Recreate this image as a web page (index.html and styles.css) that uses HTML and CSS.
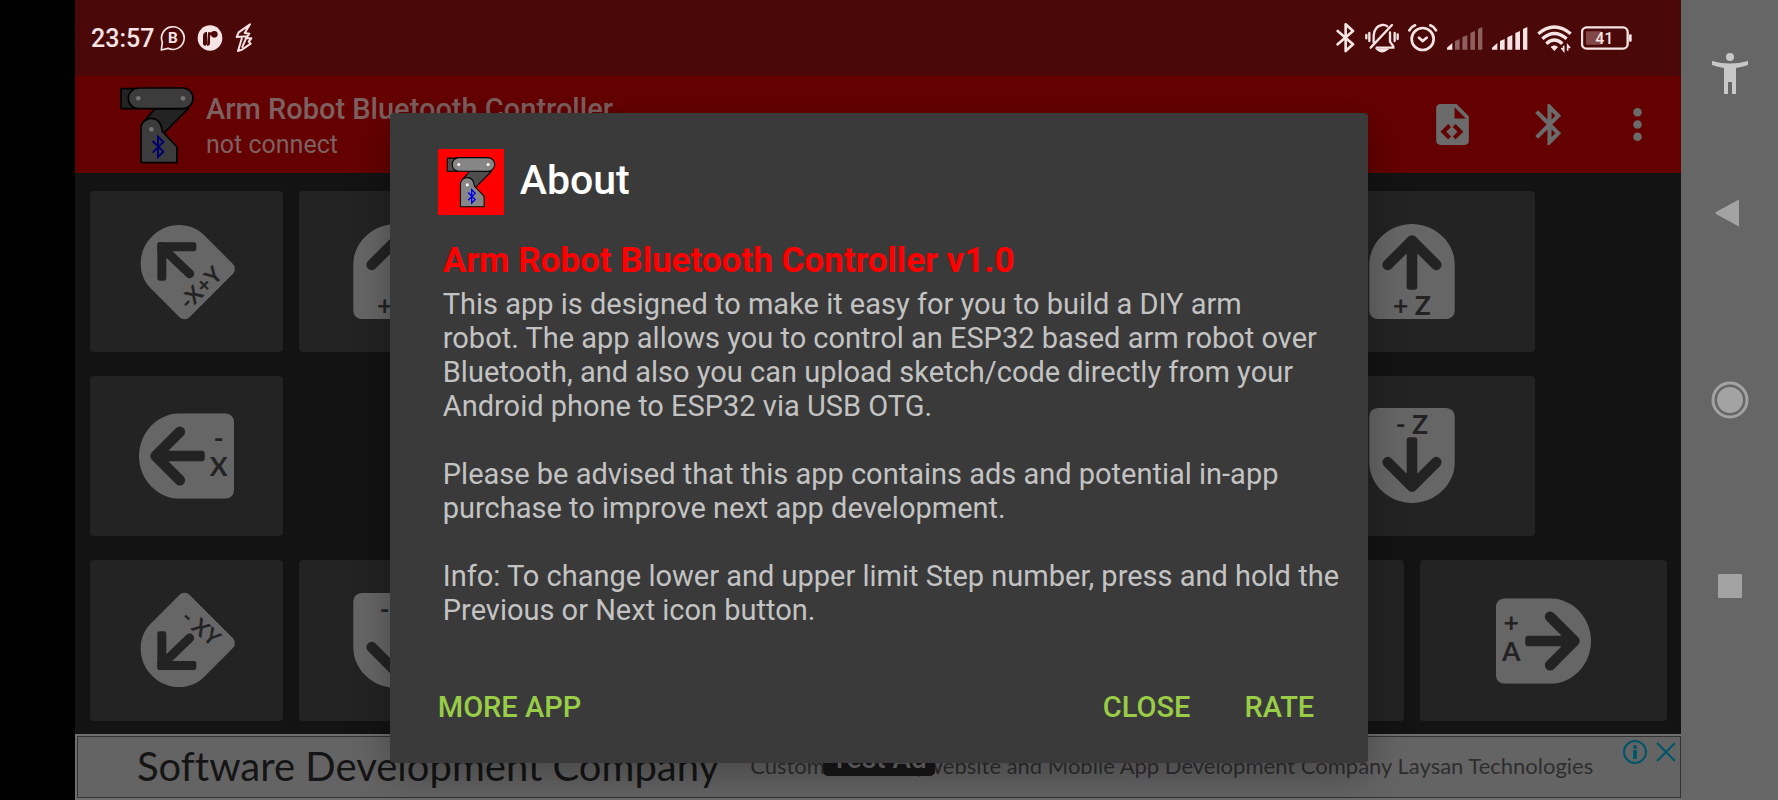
FILE: index.html
```html
<!DOCTYPE html>
<html lang="en">
<head>
<meta charset="UTF-8">
<meta name="viewport" content="width=device-width, initial-scale=1.0">
<title>Arm Robot Bluetooth Controller</title>
<link rel="stylesheet" href="styles.css">
</head>
<body>

<!-- shared shapes -->
<svg class="defs" width="0" height="0" aria-hidden="true">
  <symbol id="robot" viewBox="28 30 228 234">
    <g stroke="#000" stroke-width="5" stroke-linejoin="round">
      <path class="robot-dark" d="M34 38H80V98H34Z"/>
      <path class="robot-dark" d="M136 98H236L158 176L100 140Z"/>
      <rect class="robot-light" x="56" y="36" width="194" height="62" rx="31"/>
      <path class="robot-light" d="M94 260V163A31 31 0 0 1 155 152L158 166L202 213V260Z"/>
    </g>
    <circle class="robot-dot" cx="86" cy="67" r="7"/>
    <circle class="robot-dot" cx="220" cy="67" r="7"/>
    <circle class="robot-dot" cx="125" cy="160" r="7"/>
    <path class="robot-bt" d="M129 195L161 227L145 243V182L161 198L129 230" fill="none" stroke-width="6"/>
  </symbol>
  <symbol id="plate" viewBox="0 0 258 286">
    <path d="M129 0C200 0 258 56 258 124V260A26 26 0 0 1 232 286H26A26 26 0 0 1 0 260V124C0 56 58 0 129 0Z"/>
  </symbol>
  <symbol id="arrow" viewBox="0 0 258 286">
    <path d="M56 123L129 50L202 123" fill="none" stroke="#232323" stroke-width="32" stroke-linecap="round" stroke-linejoin="round"/>
    <path d="M129 40L150 62L146 90H112L108 62Z" fill="#232323"/>
    <rect x="113" y="50" width="32" height="148" rx="9" fill="#232323"/>
  </symbol>
</svg>

<div class="cutout"></div>

<div class="app">
  <div class="status-bar">
    <span class="clock">23:57</span>
    <svg width="26" height="30" viewBox="0 0 78 90" fill="none" stroke="#f6e4e4" stroke-width="5">
      <path d="M4 81L7 58A34 34 0 1 1 24 76Z" stroke-linejoin="round"/>
      <text x="39" y="60" text-anchor="middle" class="icon-text">B</text>
    </svg>
    <svg class="gap-left" width="26" height="30" viewBox="0 0 78 90">
      <ellipse cx="39" cy="45" rx="37" ry="38" fill="#f6e4e4"/>
      <path d="M30 24V62A6 6 0 0 1 18 62V40Q18 27 30 26M33 28H44V32Q40 34 39 42V62Q38 70 30 68" fill="#4a0908"/>
      <circle cx="52" cy="34" r="10" fill="#4a0908"/>
    </svg>
    <svg class="gap-left" width="20" height="30" viewBox="0 0 60 90" fill="none" stroke="#f6e4e4" stroke-width="6" stroke-linejoin="round">
      <path d="M48 4L14 28L8 42L40 40L46 32L32 30L48 4ZM24 44L12 84L24 80L50 62L44 56L52 46L36 46L24 74"/>
    </svg>

    <div class="status-right">
      <svg width="20" height="30" viewBox="27 24 60 90" fill="none" stroke="#f6e4e4" stroke-width="8" stroke-linejoin="round" stroke-linecap="round">
        <path d="M32 48L78 88L56 108V28L78 48L32 88"/>
      </svg>
      <svg width="34" height="30" viewBox="117 24 102 90" fill="none" stroke="#f6e4e4" stroke-width="7" stroke-linecap="round">
        <path d="M121 60V70M130 54V78M215 58V72M206 54V78M134 98L198 30"/>
        <path d="M143 82V62Q145 34 168 30Q178 29 184 34M192 52V80L202 94V98H152"/>
        <path d="M156 104Q168 114 181 104Z" fill="#f6e4e4"/>
      </svg>
      <svg width="30" height="30" viewBox="249 24 90 90" fill="none" stroke="#f6e4e4" stroke-width="8" stroke-linecap="round">
        <circle cx="293" cy="72" r="33"/>
        <path d="M282 68L293 78L305 68M253 46Q258 36 270 31M333 46Q328 36 316 31"/>
      </svg>
      <svg width="36" height="30" viewBox="366 24 108 90" fill="#8d5f5f">
        <path d="M366 104V98L382 84V104Z" fill="#f6e4e4"/>
        <path d="M390 78L404 72V104H390ZM412 67L427 60V104H412ZM436 54L450 48V104H436ZM459 42L472 36V104H459Z"/>
      </svg>
      <svg width="36" height="30" viewBox="498 24 108 90" fill="#f6e4e4">
        <path d="M498 104V98L514 84V104ZM522 78L536 72V104H522ZM544 67L559 60V104H544ZM568 54L582 48V104H568ZM591 42L604 36V104H591Z"/>
      </svg>
      <svg width="35" height="30" viewBox="633 24 105 90" fill="none" stroke="#f6e4e4" stroke-width="10">
        <path d="M637 56Q685 16 734 56M649 71Q685 40 722 71M661 86Q685 64 709 86"/>
        <path d="M675 96Q685 88 695 96L685 107Z" fill="#f6e4e4" stroke-width="2"/>
        <path d="M713 92V107L706 99M725 107V91L732 99" stroke-width="5"/>
      </svg>
      <svg width="51" height="30" viewBox="768 24 153 90">
        <rect x="771" y="37" width="137" height="64" rx="14" fill="none" stroke="#f6e4e4" stroke-width="7"/>
        <rect x="783" y="49" width="46" height="40" rx="3" fill="#824848"/>
        <rect x="912" y="58" width="8" height="22" rx="3" fill="#f6e4e4"/>
        <text x="838" y="87" text-anchor="middle" class="battery-text">41</text>
      </svg>
    </div>
  </div>

  <div class="screen">
    <header class="action-bar">
      <svg class="logo robot-dim" width="76" height="78"><use href="#robot"/></svg>
      <div class="titles">
        <h1>Arm Robot Bluetooth Controller</h1>
        <p>not connect</p>
      </div>
      <div class="actions">
        <button type="button" class="action" aria-label="Upload code">
          <svg width="49" height="49" viewBox="0 0 24 24"><path d="M13,9H18.5L13,3.5V9M6,2H14L20,8V20A2,2 0 0,1 18,22H6C4.89,22 4,21.1 4,20V4C4,2.89 4.89,2 6,2M6.12,15.5L9.86,19.24L11.28,17.83L8.95,15.5L11.28,13.17L9.86,11.76L6.12,15.5M17.28,15.5L13.54,11.76L12.12,13.17L14.45,15.5L12.12,17.83L13.54,19.24L17.28,15.5Z"/></svg>
        </button>
        <button type="button" class="action" aria-label="Bluetooth">
          <svg width="49" height="49" viewBox="0 0 24 24"><path d="M17.71 7.71L12 2h-1v7.59L6.41 5 5 6.41 10.59 12 5 17.59 6.41 19 11 14.41V22h1l5.71-5.71-4.3-4.29 4.3-4.29zM13 5.83l1.88 1.88L13 9.59V5.83zm1.88 10.46L13 18.17v-3.76l1.88 1.88z"/></svg>
        </button>
        <button type="button" class="action more" aria-label="More options">
          <svg width="49" height="49" viewBox="0 0 24 24"><circle cx="12" cy="6" r="2.1"/><circle cx="12" cy="12" r="2.1"/><circle cx="12" cy="18" r="2.1"/></svg>
        </button>
      </div>
    </header>

    <main class="pad">
      <div class="pad-left">
        <button type="button" class="key">
          <svg width="94" height="95" viewBox="0 0 282 285">
            <use href="#plate" width="258" height="286" transform="translate(115 116) rotate(-45) scale(.88) translate(-129 -127)"/>
            <path d="M74 78L149 149" stroke="#232323" stroke-width="27" stroke-linecap="round"/>
            <rect x="52" y="55" width="117" height="27" rx="7" fill="#232323"/>
            <rect x="52" y="55" width="27" height="115" rx="7" fill="#232323"/>
            <text transform="translate(199 208) rotate(-45)" text-anchor="middle" class="key-small">-X+Y</text>
          </svg>
        </button>
        <button type="button" class="key">
          <svg width="86" height="95" viewBox="0 0 258 286">
            <use href="#plate"/><use href="#arrow"/>
            <text x="129" y="273" text-anchor="middle" class="key-text">+ Y</text>
          </svg>
        </button>
        <button type="button" class="key">
          <svg width="95" height="86" viewBox="0 0 286 258">
            <g transform="translate(286 0) rotate(90)"><use href="#plate" width="258" height="286"/></g>
          </svg>
        </button>
        <button type="button" class="key">
          <svg width="95" height="86" viewBox="0 0 286 258">
            <g transform="translate(0 258) rotate(-90)"><use href="#plate" width="258" height="286"/><use href="#arrow" width="258" height="286"/></g>
            <text x="240" y="106" text-anchor="middle" class="key-text">-</text>
            <text x="240" y="188" text-anchor="middle" class="key-text">X</text>
          </svg>
        </button>
        <button type="button" class="key key-third">
          <svg width="95" height="86" viewBox="0 0 286 258">
            <g transform="translate(286 0) rotate(90)"><use href="#plate" width="258" height="286"/><use href="#arrow" width="258" height="286"/></g>
          </svg>
        </button>
        <button type="button" class="key">
          <svg width="94" height="95" viewBox="0 0 282 285">
            <use href="#plate" width="258" height="286" transform="translate(115 169) rotate(-135) scale(.88) translate(-129 -127)"/>
            <path d="M74 207L149 135" stroke="#232323" stroke-width="27" stroke-linecap="round"/>
            <rect x="52" y="204" width="117" height="27" rx="7" fill="#232323"/>
            <rect x="52" y="115" width="27" height="116" rx="7" fill="#232323"/>
            <text transform="translate(168 122) rotate(40)" text-anchor="middle" class="key-small">- XY</text>
          </svg>
        </button>
        <button type="button" class="key">
          <svg width="86" height="95" viewBox="0 0 258 286">
            <g transform="translate(258 286) rotate(180)"><use href="#plate" width="258" height="286"/><use href="#arrow" width="258" height="286"/></g>
            <text x="129" y="78" text-anchor="middle" class="key-text">- Y</text>
          </svg>
        </button>
        <button type="button" class="key">
          <svg width="95" height="86" viewBox="0 0 286 258">
            <g transform="translate(286 0) rotate(90)"><use href="#plate" width="258" height="286"/></g>
          </svg>
        </button>
      </div>

      <div class="pad-right">
        <button type="button" class="key key-mid">
          <svg width="86" height="95" viewBox="0 0 258 286">
            <use href="#plate"/><use href="#arrow"/>
            <text x="129" y="273" text-anchor="middle" class="key-text">+ Z</text>
          </svg>
        </button>
        <button type="button" class="key key-mid">
          <svg width="86" height="95" viewBox="0 0 258 286">
            <g transform="translate(258 286) rotate(180)"><use href="#plate" width="258" height="286"/><use href="#arrow" width="258" height="286"/></g>
            <text x="129" y="78" text-anchor="middle" class="key-text">- Z</text>
          </svg>
        </button>
        <button type="button" class="key">
          <svg width="95" height="86" viewBox="0 0 286 258">
            <g transform="translate(0 258) rotate(-90)"><use href="#plate" width="258" height="286"/><use href="#arrow" width="258" height="286"/></g>
          </svg>
        </button>
        <button type="button" class="key">
          <svg width="95" height="86" viewBox="0 0 286 258">
            <g transform="translate(286 0) rotate(90)"><use href="#plate" width="258" height="286"/><use href="#arrow" width="258" height="286"/></g>
            <text x="46" y="101" text-anchor="middle" class="key-text">+</text>
            <text x="46" y="188" text-anchor="middle" class="key-text">A</text>
          </svg>
        </button>
      </div>
    </main>

    <aside class="ad">
      <a href="#" class="ad-link">
        <span class="ad-title">Software Development Company</span>
        <span class="ad-text">Custom Software,Website and Mobile App Development Company Laysan Technologies</span>
      </a>
      <span class="ad-badge">Test Ad</span>
      <div class="ad-choices">
        <svg width="26" height="26" viewBox="0 0 26 26" fill="none" stroke="#00566a" stroke-width="2">
          <circle cx="13" cy="13" r="11"/>
          <circle cx="13" cy="8" r="2" fill="#00566a" stroke="none"/>
          <path d="M13 11V20" stroke-width="4"/>
        </svg>
        <svg width="20" height="26" viewBox="0 0 20 26" fill="none" stroke="#00566a" stroke-width="2"><path d="M1 4L19 22M19 4L1 22"/></svg>
      </div>
    </aside>

    <div class="overlay">
      <div class="dialog" role="dialog" aria-labelledby="about-title">
        <div class="dialog-head">
          <div class="app-icon"><svg width="50" height="52"><use href="#robot"/></svg></div>
          <h2 id="about-title">About</h2>
        </div>
        <div class="dialog-body">
          <h3>Arm Robot Bluetooth Controller v1.0</h3>
          <p>This app is designed to make it easy for you to build a DIY arm<br>
            robot. The app allows you to control an ESP32 based arm robot over<br>
            Bluetooth, and also you can upload sketch/code directly from your<br>
            Android phone to ESP32 via USB OTG.</p>
          <p>Please be advised that this app contains ads and potential in-app<br>
            purchase to improve next app development.</p>
          <p>Info: To change lower and upper limit Step number, press and hold the<br>
            Previous or Next icon button.</p>
        </div>
        <div class="dialog-buttons">
          <button type="button" class="more-app">MORE APP</button>
          <button type="button">CLOSE</button>
          <button type="button">RATE</button>
        </div>
      </div>
    </div>
  </div>
</div>

<nav class="nav-bar">
  <button type="button" class="nav-access" aria-label="Accessibility">
    <svg width="38" height="42" viewBox="0 0 38 42" fill="#c8c8c8">
      <circle cx="19" cy="4" r="4"/>
      <path d="M1 8Q19 13 37 8V12Q31 14 25 15V41H21V29H17V41H13V15Q7 14 1 12Z"/>
    </svg>
  </button>
  <button type="button" aria-label="Back">
    <svg width="32" height="28" viewBox="0 0 32 28" fill="#a3a3a3"><path d="M25 1V27Q25 28 24 27L2 15Q1 14 2 13L24 1Q25 0 25 1Z"/></svg>
  </button>
  <button type="button" aria-label="Home">
    <svg width="38" height="38" viewBox="0 0 38 38" fill="#a3a3a3"><circle cx="19" cy="19" r="17" fill="none" stroke="#a3a3a3" stroke-width="3"/><circle cx="19" cy="19" r="13"/></svg>
  </button>
  <button type="button" aria-label="Recent apps">
    <svg width="24" height="24" viewBox="0 0 24 24" fill="#a3a3a3"><rect width="24" height="24" rx="1"/></svg>
  </button>
</nav>

</body>
</html>
```
FILE: styles.css
```css
* {
  box-sizing: border-box;
}

body {
  margin: 0;
  min-height: 100vh;
  display: flex;
  background-color: #131313;
  font-family: Roboto, "Liberation Sans", sans-serif;
}

h1, h2, h3, p {
  margin: 0;
}

button {
  border: none;
  padding: 0;
  background: none;
  font-family: inherit;
  cursor: pointer;
}

svg {
  display: block;
  flex: none;
}

.defs {
  position: absolute;
}

.cutout {
  flex: 0 0 75px;
  background-color: #000;
}

.app {
  flex: 1;
  min-width: 0;
  display: flex;
  flex-direction: column;
}

/* status bar */
.status-bar {
  height: 76px;
  padding: 0 49px 0 16px;
  display: flex;
  align-items: center;
  background-color: #4a0908;
  color: #f6e4e4;
}

.clock {
  margin-right: 6px;
  font-size: 25px;
  font-weight: 500;
}

.gap-left {
  margin-left: 11px;
}

.icon-text {
  font-size: 46px;
  font-weight: 700;
  fill: #f6e4e4;
  stroke: none;
}

.battery-text {
  font-size: 48px;
  font-weight: 500;
  fill: #f6e4e4;
}

.status-right {
  margin-left: auto;
  display: flex;
  gap: 9px;
}

/* everything under the status bar */
.screen {
  flex: 1;
  position: relative;
  display: flex;
  flex-direction: column;
}

.action-bar {
  height: 97px;
  padding: 0 5px 0 44px;
  display: flex;
  align-items: center;
  background-color: #650000;
  color: #7d6060;
}

.titles {
  margin-left: 11px;
  padding-top: 4px;
}

.titles h1 {
  font-size: 29px;
  line-height: 36px;
  font-weight: 500;
}

.titles p {
  font-size: 25px;
  line-height: 36px;
}

.actions {
  margin-left: auto;
  display: flex;
}

.action {
  width: 97px;
  height: 97px;
  display: flex;
  align-items: center;
  justify-content: center;
  fill: #6b6b6b;
}

.more {
  width: 78px;
}

/* robot drawing */
.robot-dark { fill: #4d4d4d; }
.robot-light { fill: #868686; }
.robot-dot { fill: #fff; }
.robot-bt { stroke: #0000f0; }

.robot-dim {
  filter: brightness(0.45);
}

/* arrow keys */
.pad {
  flex: 1;
  padding: 18px 14px 13px 15px;
  display: flex;
  justify-content: space-between;
}

.pad-left,
.pad-right {
  display: grid;
  grid-template-rows: repeat(3, 1fr);
  gap: 24px 16px;
}

.pad-left {
  width: 38.75%;
  grid-template-columns: repeat(3, 1fr);
}

.pad-right {
  width: 32.35%;
  grid-template-columns: repeat(4, 1fr);
}

.key {
  display: flex;
  align-items: center;
  justify-content: center;
  border-radius: 4px;
  background-color: #232323;
  fill: #666;
}

.key svg {
  overflow: visible;
}

.key-third {
  grid-column: 3;
}

.pad-right .key {
  grid-column: span 2;
}

.pad-right .key-mid {
  grid-column: 2 / span 2;
}

.key-text,
.key-small {
  font-family: Lato, sans-serif;
  font-weight: 700;
  fill: #232323;
}

.key-text {
  font-size: 80px;
}

.key-small {
  font-size: 66px;
}

/* banner ad */
.ad {
  position: relative;
  height: 66px;
  border: 2px solid #6e6e6e;
  border-right: none;
  box-shadow: inset 0 0 0 1px #333;
  display: flex;
  align-items: flex-start;
  background-color: #646464;
}

.ad-link {
  flex: 1;
  padding-left: 60px;
  display: flex;
  align-items: center;
  gap: 31px;
  line-height: 60px;
  white-space: nowrap;
  text-decoration: none;
  font-family: Lato, sans-serif;
  font-variant-ligatures: none;
}

.ad-title {
  font-size: 40px;
  color: #151515;
}

.ad-text {
  font-size: 22px;
  color: #2e2e2e;
}

.ad-badge {
  position: absolute;
  bottom: 22px;
  left: 50%;
  padding: 2px 8px;
  transform: translateX(-50%);
  border-radius: 5px;
  background-color: #171717;
  color: #6b6b6b;
  font-size: 28px;
  line-height: 30px;
  font-weight: 500;
}

.ad-choices {
  padding: 3px 5px;
  display: flex;
  gap: 8px;
}

/* about dialog */
.overlay {
  position: absolute;
  inset: 0;
  padding-left: 2px;
  display: flex;
  align-items: center;
  justify-content: center;
}

.dialog {
  width: 61%;
  min-width: 960px;
  padding: 36px 48px 26px;
  border-radius: 4px;
  background-color: #3a3a3a;
  box-shadow: 0 12px 40px rgba(0, 0, 0, 0.3);
}

.dialog-head {
  display: flex;
  align-items: center;
  gap: 16px;
}

.app-icon {
  width: 66px;
  height: 66px;
  display: flex;
  align-items: center;
  justify-content: center;
  background-color: #f00;
}

.dialog h2 {
  padding-bottom: 4px;
  font-size: 41px;
  line-height: 46px;
  font-weight: 500;
  color: #fff;
}

.dialog-body {
  padding: 26px 0 0 5px;
  font-size: 29px;
  line-height: 34px;
  color: #c3c3c3;
  white-space: nowrap;
}

.dialog h3 {
  margin-bottom: 6px;
  font-size: 35px;
  line-height: 40px;
  font-weight: 700;
  color: #f00;
}

.dialog-body p + p {
  margin-top: 34px;
}

.dialog-buttons {
  margin-top: 50px;
  padding-right: 6px;
  display: flex;
  gap: 54px;
}

.dialog-buttons button {
  height: 60px;
  color: #99cc47;
  font-size: 29px;
  font-weight: 500;
}

.dialog-buttons .more-app {
  margin-right: auto;
}

/* system navigation */
.nav-bar {
  flex: 0 0 97px;
  padding: 27px 0 121px;
  display: flex;
  flex-direction: column;
  background-color: #666;
}

.nav-bar button {
  flex: 2;
  display: flex;
  align-items: center;
  justify-content: center;
}

.nav-bar .nav-access {
  flex: 1;
}
```
